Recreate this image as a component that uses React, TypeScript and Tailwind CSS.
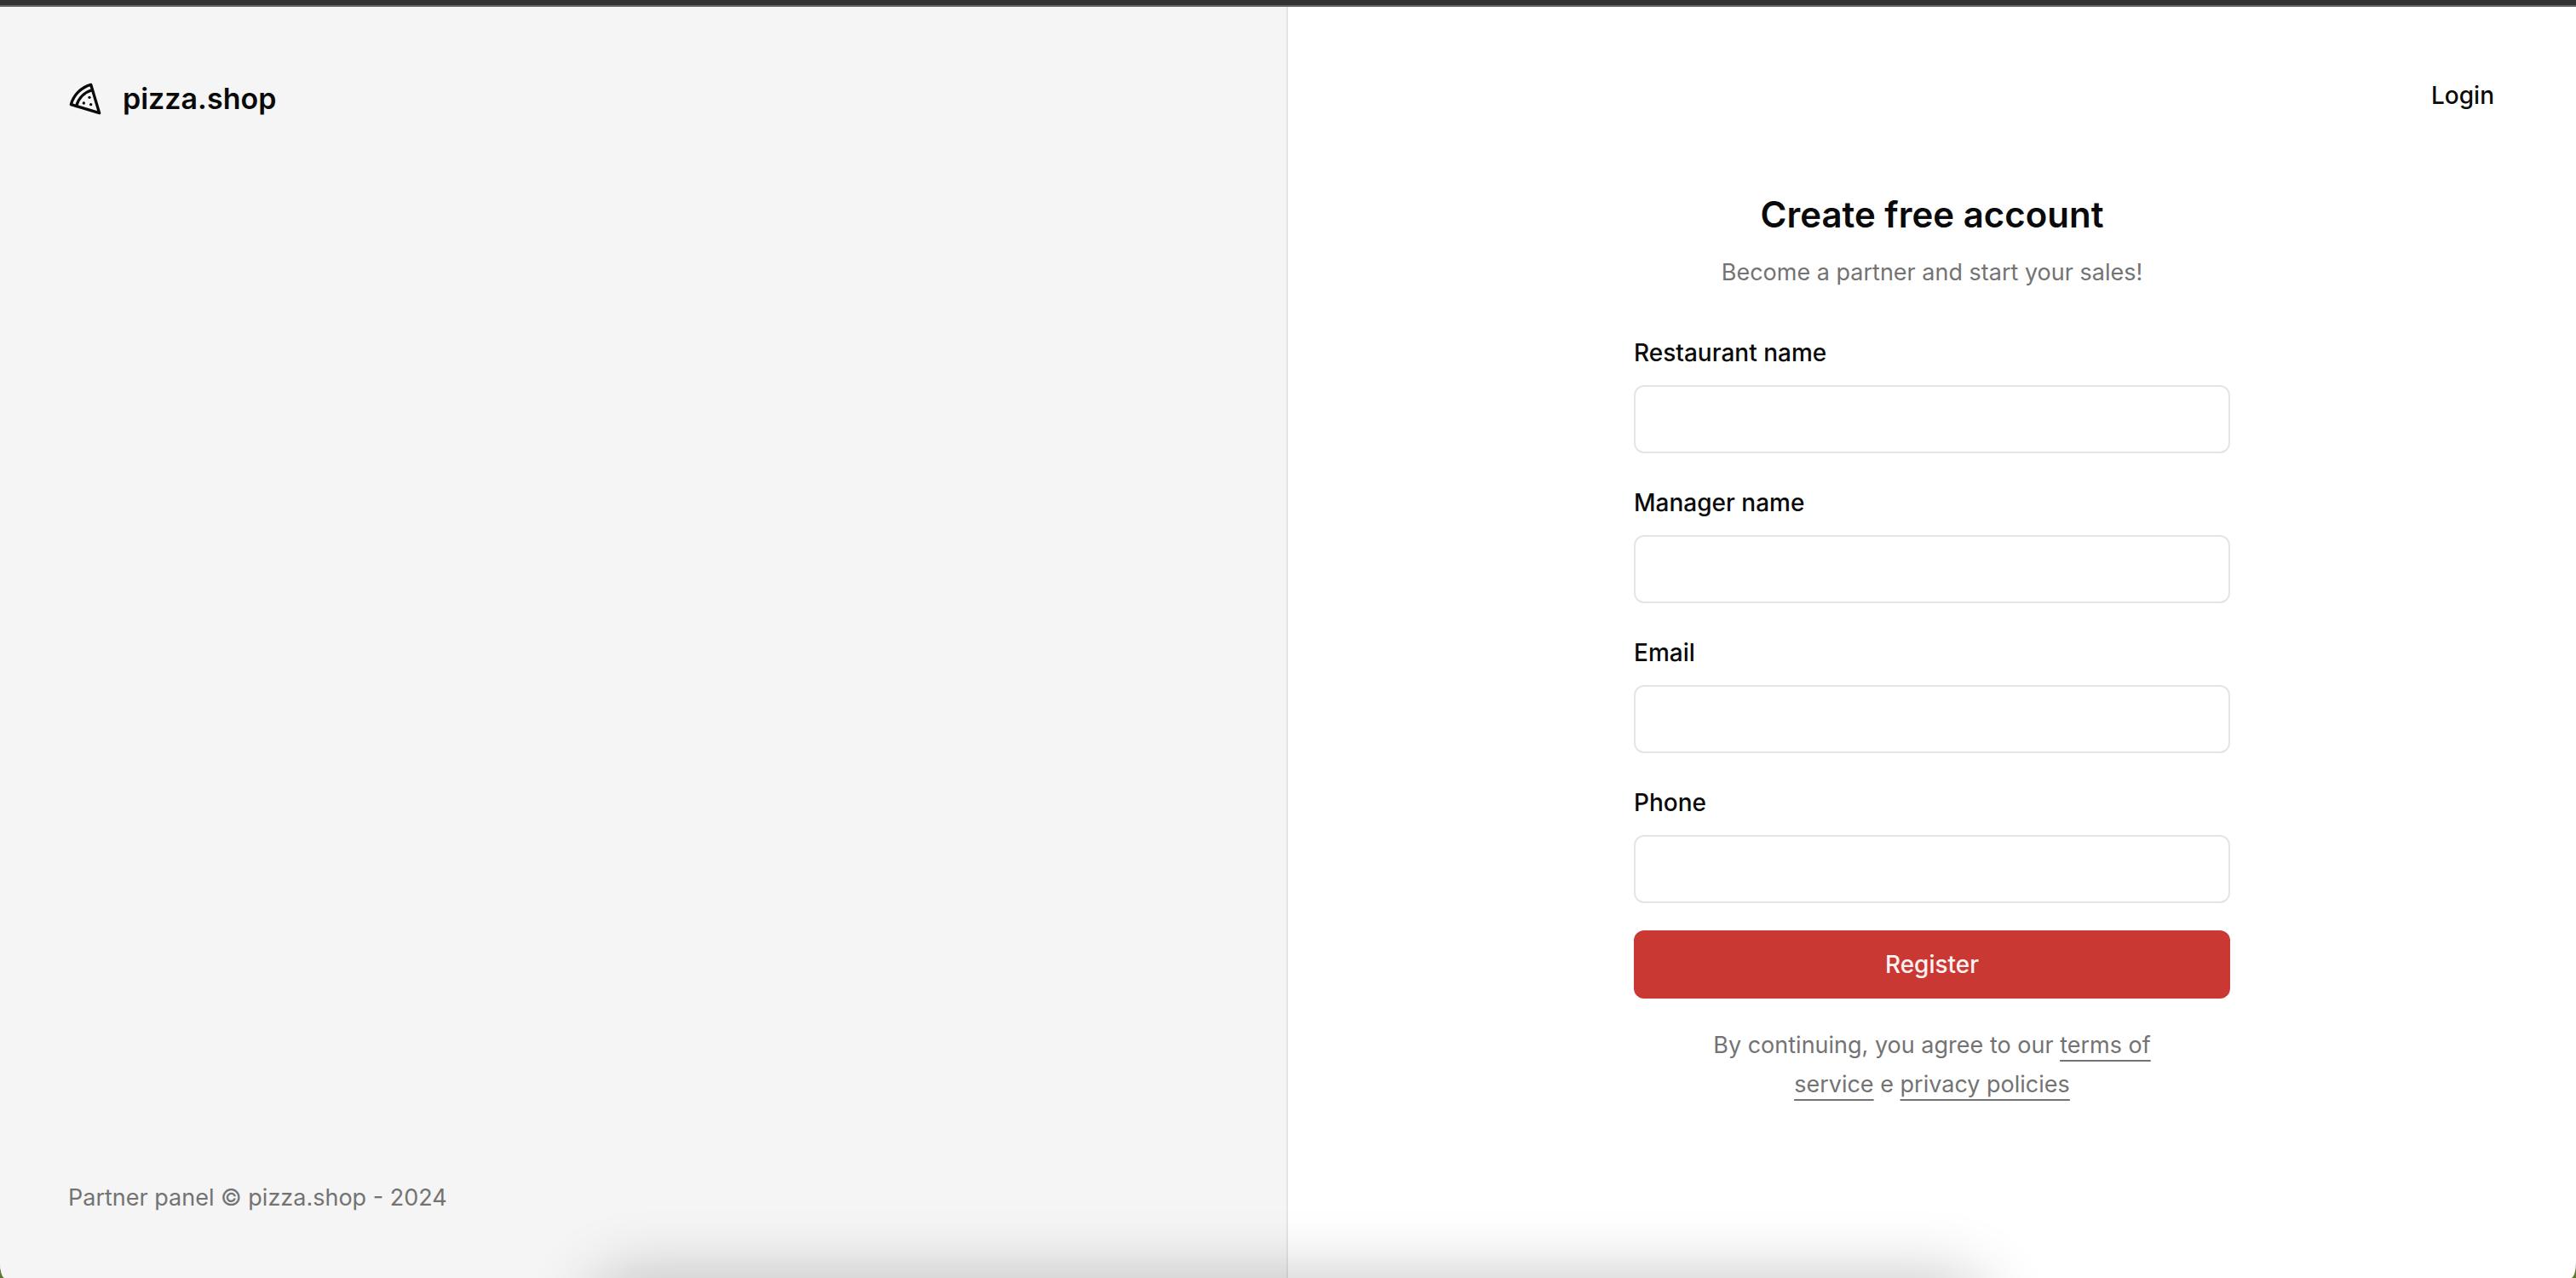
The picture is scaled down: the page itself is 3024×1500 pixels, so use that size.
import { useState } from "react";

const fields = [
  { id: "restaurantName", label: "Restaurant name", type: "text" },
  { id: "managerName", label: "Manager name", type: "text" },
  { id: "email", label: "Email", type: "email" },
  { id: "phone", label: "Phone", type: "tel" },
];

function PizzaIcon() {
  return (
    <svg
      aria-hidden="true"
      viewBox="0 0 24 24"
      fill="none"
      stroke="currentColor"
      strokeWidth="2"
      strokeLinecap="round"
      strokeLinejoin="round"
      className="size-10"
    >
      <path d="M15 11h.01" />
      <path d="M11 15h.01" />
      <path d="M16 16h.01" />
      <path d="m2 16 20 6-6-20A20 20 0 0 0 2 16" />
      <path d="M5.71 17.11a17.04 17.04 0 0 1 11.4-11.4" />
    </svg>
  );
}

function Brand() {
  return (
    <div className="flex items-center gap-6 text-[34px] leading-14 font-semibold">
      <PizzaIcon />
      <span>pizza.shop</span>
    </div>
  );
}

function SignUpForm() {
  const [values, setValues] = useState<Record<string, string>>({});
  return (
    <div className="flex w-full max-w-[700px] flex-col">
      <h1 className="text-center text-[42px] leading-16 font-semibold">Create free account</h1>
      <p className="mt-4 text-center text-[27px] leading-10 text-neutral-500">
        Become a partner and start your sales!
      </p>
      <form className="mt-12 flex flex-col gap-8" onSubmit={(e) => e.preventDefault()}>
        {fields.map((f) => (
          <div key={f.id} className="flex flex-col gap-3">
            <label htmlFor={f.id} className="leading-13 font-medium">
              {f.label}
            </label>
            <input
              id={f.id}
              type={f.type}
              value={values[f.id] ?? ""}
              onChange={(e) => setValues({ ...values, [f.id]: e.target.value })}
              className="h-20 w-full rounded-xl border-2 border-neutral-200 bg-white px-6 outline-none focus:border-neutral-400"
            />
          </div>
        ))}
        <button
          type="submit"
          className="h-20 w-full rounded-xl bg-[#ca3833] font-medium text-red-50"
        >
          Register
        </button>
        <p className="px-20 text-center text-[27px] leading-[46px] text-neutral-500">
          By continuing, you agree to our{" "}
          <a href="#terms" className="underline decoration-2 underline-offset-8">
            terms of service
          </a>{" "}
          e{" "}
          <a href="#privacy" className="underline decoration-2 underline-offset-8">
            privacy policies
          </a>
        </p>
      </form>
    </div>
  );
}

export default function App() {
  return (
    <div className="relative flex min-h-screen flex-col overflow-hidden bg-[#5d7a2c] font-['Inter',sans-serif] text-[28px] text-neutral-950 antialiased">
      <div className="h-2 border-b-2 border-[#666364] bg-[#343334]" />
      <div className="grid grow grid-cols-2 overflow-hidden rounded-br-[6px_18px] rounded-bl-[6px_18px] bg-white">
        <aside className="flex flex-col justify-between border-r-2 border-neutral-200 bg-neutral-100 p-20">
          <Brand />
          <footer className="text-[27px] leading-7 text-neutral-500">
            Partner panel © pizza.shop - 2024
          </footer>
        </aside>
        <main className="relative flex flex-col items-center justify-center pt-2">
          <a href="#login" className="absolute top-21 right-24 leading-10 font-medium">
            Login
          </a>
          <SignUpForm />
        </main>
      </div>
      <div className="pointer-events-none absolute inset-x-[23%] top-full h-40 rounded-[40px] shadow-[0_0_80px_0_rgba(0,0,0,0.24)]" />
    </div>
  );
}
